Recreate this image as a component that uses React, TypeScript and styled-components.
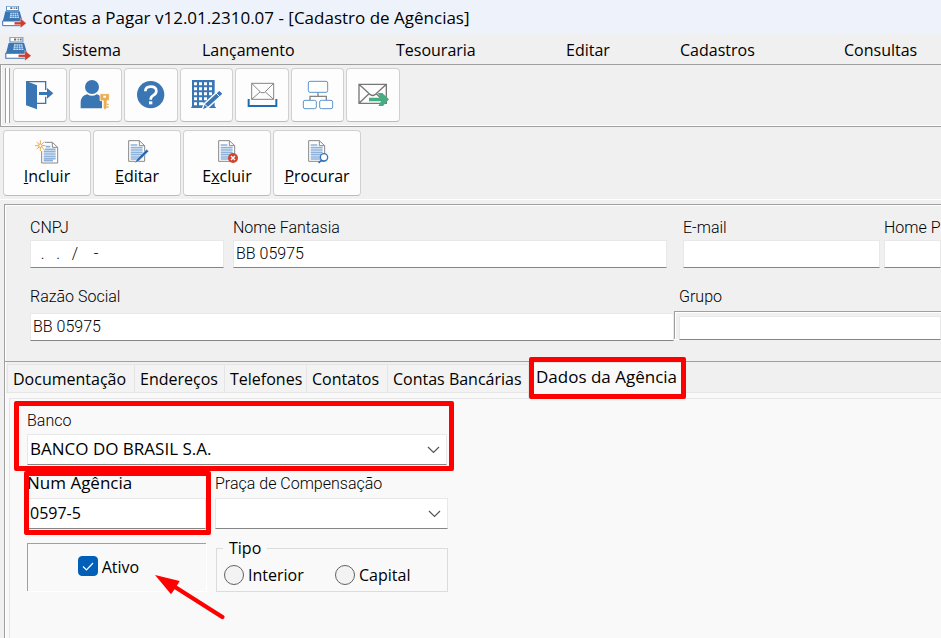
import React from "react";
import styled, { createGlobalStyle, css } from "styled-components";

const GlobalStyle = createGlobalStyle`
  *, *::before, *::after { box-sizing: border-box; }
  html, body, #root { min-height: 100vh; }
  body { margin: 0; overflow-x: hidden; background: #f0f0f0; color: #000; font: 16px/20px "Open Sans", "Noto Sans", sans-serif; }
  #root { display: flex; flex-direction: column; }
  button, input, select { font: inherit; color: inherit; }
`;

const BLUE = "#3a75b4";
const LINE = "#a0a0a0";
const RED = "#ff0000";

const Page = styled.div`
  flex: 1;
  display: flex;
  flex-direction: column;
  overflow: hidden;
`;

const TitleBar = styled.header`
  display: flex;
  align-items: center;
  gap: 5px;
  height: 34px;
  padding-left: 1px;
  background: #eef3fb;
  white-space: nowrap;
`;

const Title = styled.h1`
  margin: 0;
  padding-top: 2px;
  font-size: 17px;
  line-height: 24px;
  font-weight: 400;
`;

const MenuBar = styled.nav`
  display: grid;
  grid-template-columns: 58px 140px 194px 170px 114px 164px 1fr;
  align-items: center;
  height: 31px;
  padding-left: 4px;
  border-bottom: 1px solid ${LINE};
`;

const MenuItem = styled.button`
  justify-self: start;
  padding: 2px 0 0;
  border: 0;
  background: none;
  line-height: 24px;
`;

const ToolBar = styled.div`
  display: flex;
  gap: 4px;
  height: 62px;
  padding: 3px 0 0 5px;
  border-left: 1px solid ${LINE};
  border-bottom: 1px solid ${LINE};
  box-shadow: inset 1px -1px #fff;
`;

const Grip = styled.div`
  width: 5px;
  height: 55px;
  margin-left: -1px;
  border-left: 1px solid ${LINE};
  border-right: 1px solid ${LINE};
  background: #fff;
`;

const ToolGroup = styled.div`
  display: grid;
  grid-template-columns: repeat(7, 1fr);
  gap: 2px;
  width: 387px;
  height: 54px;
  margin-left: -1px;
`;

const Face = styled.button`
  display: flex;
  flex-direction: column;
  align-items: center;
  justify-content: center;
  padding: 0;
  border: 1px solid #d0d0d0;
  border-bottom-color: #bbb;
  border-radius: 4px;
  background: #fdfdfd;
`;

const ActionBar = styled.div`
  display: flex;
  gap: 2px;
  padding: 3px;
  border-bottom: 1px solid #fff;
`;

const ActionButton = styled(Face)`
  width: 88px;
  height: 66px;
  justify-content: flex-start;
  padding-top: 7px;
  line-height: 20px;
`;

const Panel = styled.main`
  flex: 1;
  display: flex;
  flex-direction: column;
  margin: 4px 0 0 4px;
  border-top: 1px solid ${LINE};
  border-left: 1px solid ${LINE};
  box-shadow: inset 1px 1px #fff;
`;

const FormArea = styled.section`
  display: flex;
  flex-direction: column;
  gap: 19px;
  padding: 13px 0 20px 25px;
  border-bottom: 1px solid ${LINE};
`;

const FieldRow = styled.div<{ $columns: string }>`
  display: grid;
  grid-template-columns: ${(p) => p.$columns};
`;

const Field = styled.div<{ $gap?: number; $end?: number }>`
  display: flex;
  flex-direction: column;
  gap: ${(p) => p.$gap ?? 4}px;
  padding-right: ${(p) => p.$end ?? 0}px;
  min-width: 0;
  position: relative;
`;

const Label = styled.label<{ $system?: boolean; $indent?: number }>`
  height: 18px;
  padding-left: ${(p) => p.$indent ?? 0}px;
  font-family: Roboto, "Liberation Sans", sans-serif;
  font-weight: 300;
  line-height: 20px;
  white-space: nowrap;
  ${(p) => p.$system && css`
    font-family: "Open Sans", sans-serif;
    font-size: 17px;
    font-weight: 400;
    line-height: 18px;
  `}
`;

const control = css`
  width: 100%;
  border: 1px solid #e8e8e8;
  border-bottom-color: #858585;
  border-radius: 0;
  background: #fff;
  outline: 0;
`;

const TextInput = styled.input`
  ${control}
  height: 28px;
  padding: 0 2px 2px;
  font-family: Roboto, "Liberation Sans", sans-serif;
  font-weight: 300;
  white-space: pre;
`;

const AgencyInput = styled(TextInput)`
  height: 31px;
  font-family: "Open Sans", sans-serif;
  font-weight: 400;
`;

const Sunken = styled.div`
  height: 28px;
  padding: 4px 0 0 4px;
  margin-top: -2px;
  border-top: 1px solid ${LINE};
  border-left: 1px solid ${LINE};
  box-shadow: inset 1px 1px #fff, 0 1px #fff;

  ${TextInput} { height: 24px; }
`;

const TabArea = styled.section`
  flex: 1;
  display: flex;
  flex-direction: column;
  margin-left: 1px;
  background: #f9f9f9;
`;

const TabList = styled.div`
  display: flex;
  height: 31px;
  padding: 2px 0 0 1px;
  background: #f0f0f0;
  border-bottom: 1px solid #e5e5e5;
`;

const Tab = styled.button<{ $width: number; $active?: boolean }>`
  position: relative;
  flex: none;
  width: ${(p) => p.$width}px;
  padding: 0 0 0 5px;
  border: solid #e5e5e5;
  border-width: 1px 0 0 1px;
  background: #f3f3f3;
  text-align: left;
  white-space: nowrap;
  ${(p) => p.$active && css`
    height: 36px;
    margin-top: -2px;
    padding: 0 0 8px 7px;
    background: #f9f9f9;
    font-size: 17px;
  `}
`;

const TabPage = styled.div`
  flex: 1;
  margin: 5px 0 0 3px;
  padding: 12px 0 0 17px;
  border-top: 1px solid #e5e5e5;
  border-left: 1px solid #e5e5e5;
`;

const AgencyGrid = styled.div`
  display: grid;
  grid-template-columns: 179px 233px;
  column-gap: 9px;
  width: 421px;
`;

const BankField = styled(Field)`
  grid-column: 1 / -1;
  margin-bottom: 9px;
`;

const Highlight = styled.span<{ $inset: string }>`
  position: absolute;
  z-index: 1;
  inset: ${(p) => p.$inset};
  border: 5px solid ${RED};
  border-radius: 2px;
  pointer-events: none;
`;

const SelectBox = styled.div`
  position: relative;

  select {
    ${control}
    appearance: none;
    height: 31px;
    padding: 0 30px 2px 2px;
    font-size: 17px;
  }
  svg {
    position: absolute;
    right: 7px;
    top: 12px;
    pointer-events: none;
  }
`;

const ActiveBox = styled.div`
  position: relative;
  display: flex;
  justify-content: center;
  height: 48px;
  margin-top: 14px;
  padding: 12px 17px 0 0;
  border-top: 1px solid ${LINE};
  border-left: 1px solid ${LINE};
  box-shadow: 1px 1px #fff;
`;

const CheckLabel = styled.label`
  display: grid;
  grid-template-columns: 20px auto;
  column-gap: 4px;
  align-self: flex-start;
  line-height: 22px;

  input, svg { grid-area: 1 / 1; margin: 0; }
  input {
    appearance: none;
    width: 20px;
    height: 20px;
    border: 1px solid #666;
    border-radius: 4px;
    background: #fff;
  }
  input:checked { border-color: #005fb8; background: #005fb8; }
  svg { visibility: hidden; pointer-events: none; }
  input:checked + svg { visibility: visible; }
`;

const ArrowMark = styled.svg`
  position: absolute;
  left: 125px;
  top: 29px;
  pointer-events: none;
`;

const TypeGroup = styled.fieldset`
  display: grid;
  grid-template-columns: 111px 1fr;
  align-items: center;
  min-width: 0;
  height: 54px;
  margin: 9px 0 0 1px;
  padding: 0 0 0 7px;
  border: 1px solid #dcdcdc;

  legend {
    margin-left: -1px;
    padding: 0 6px;
    height: 20px;
    line-height: 20px;
  }
`;

const RadioLabel = styled.label`
  display: flex;
  align-items: center;
  gap: 4px;

  input {
    appearance: none;
    width: 20px;
    height: 20px;
    margin: 0;
    border: 1px solid #626262;
    border-radius: 50%;
    background: #f3f3f3;
  }
  input:checked { border: 6px solid #005fb8; background: #fff; }
`;

function RegisterIcon({ size = 26 }: { size?: number }) {
  return (
    <svg width={size} height={size} viewBox="3 12 78 78" aria-hidden="true">
      <path d="M18 18H57V33H18Z" fill="#5d94c8" />
      <path d="M21 20H54V30H21Z" fill="#fff" />
      <path d="M31 22h6v5h-6zM41 22h3v5h-3zM47 22h5v5h-5z" fill="#666" />
      <path d="M16 34H59L68 65H8Z" fill={BLUE} />
      <path d="M31 38H54L57 54H29Z" fill="#d9e7f4" />
      <path d="M30 43H55M29 49H56M37 38L36 54M43 38V54M49 38L51 54" stroke={BLUE} strokeWidth="2" />
      <path d="M8 63H66V77H8Z" fill="#fff" stroke={BLUE} strokeWidth="3" />
      <path d="M43 66H61V55L79 70L61 84V74H43Z" fill="#cf3d2e" stroke="#fff" strokeWidth="1" />
    </svg>
  );
}

function ToolIcon({ box, children }: { box: string; children: React.ReactNode }) {
  return (
    <svg width="36" height="36" viewBox={box} fill="none" aria-hidden="true">
      {children}
    </svg>
  );
}

const tools = [
  {
    name: "Sair",
    icon: (
      <ToolIcon box="66 51 108 108">
        <path d="M78 65H137V90M137 110V130H110" stroke={BLUE} strokeWidth="4" />
        <path d="M78 63L111 76V148L78 136Z" fill={BLUE} />
        <path d="M117 96H141V84L160 100L141 116V105H117Z" fill={BLUE} />
      </ToolIcon>
    ),
  },
  {
    name: "Usuário",
    icon: (
      <ToolIcon box="232 51 108 108">
        <circle cx="277" cy="81" r="21" fill={BLUE} />
        <path d="M243 145V129Q243 107 263 103Q277 112 291 103Q305 106 307 120V145Z" fill={BLUE} />
        <path d="M301 101H329V122H322V144L316 150L311 144V122H301Z" fill="#e9ae55" stroke="#fff" strokeWidth="2" />
        <path d="M311 107H319V113H311Z" fill="#fff" />
        <path d="M322 133H327M322 141H327" stroke="#e9ae55" strokeWidth="4" />
      </ToolIcon>
    ),
  },
  {
    name: "Ajuda",
    icon: (
      <ToolIcon box="399 51 108 108">
        <circle cx="452" cy="104" r="41" fill={BLUE} />
        <path d="M436 94Q436 80 452 80Q469 80 469 93Q469 102 460 106Q452 110 452 119" stroke="#fff" strokeWidth="8" />
        <path d="M447 124H457V133H447Z" fill="#fff" />
      </ToolIcon>
    ),
  },
  {
    name: "Empresa",
    icon: (
      <ToolIcon box="-33 51 108 108">
        <path d="M-21 60H47V139L52 144H-24L-21 138Z" fill={BLUE} />
        <path d="M-15 67h9v9h-9zM0 67h9v9H0zM15 67h9v9h-9zM30 67h9v9h-9zM-15 82h9v9h-9zM0 82h9v9H0zM15 82h9v9h-9zM30 82h9v9h-9zM-15 97h9v9h-9zM0 97h9v9H0zM15 97h9v9h-9zM30 97h9v9h-9zM-15 112h9v9h-9zM0 112h9v9H0zM15 112h9v9h-9zM-15 127h9v9h-9zM0 127h14v9H0z" fill="#fff" />
        <path d="M8 152L16 131L61 90L73 101L28 142Z" fill={BLUE} stroke="#fff" strokeWidth="4" />
        <path d="M50 98L63 111M16 132L27 142" stroke="#fff" strokeWidth="3" />
      </ToolIcon>
    ),
  },
  {
    name: "Caixa de entrada",
    icon: (
      <ToolIcon box="134 51 108 108">
        <path d="M157 70H223V118H157ZM157 70L185 98H195L223 70M157 118L182 96M223 118L198 96" stroke="#858585" strokeWidth="3" />
        <path d="M148 117V138H231V117" stroke="#246bb0" strokeWidth="6" />
      </ToolIcon>
    ),
  },
  {
    name: "Organograma",
    icon: (
      <ToolIcon box="300 51 108 108">
        <path d="M354 98V109M330 120V109H379V120" stroke="#858585" strokeWidth="4" />
        <rect x="325" y="64" width="58" height="33" rx="5" fill="#fff" stroke="#5c96cf" strokeWidth="3" />
        <rect x="310" y="121" width="39" height="25" rx="5" fill="#fff" stroke="#5c96cf" strokeWidth="3" />
        <rect x="359" y="121" width="39" height="25" rx="5" fill="#fff" stroke="#5c96cf" strokeWidth="3" />
      </ToolIcon>
    ),
  },
  {
    name: "Enviar",
    icon: (
      <ToolIcon box="466 51 108 108">
        <path d="M478 73H560V130H478ZM478 73L512 104Q519 109 526 104L560 73M478 130L508 101M530 101L544 115" stroke="#777" strokeWidth="4" />
        <path d="M508 113H543L534 99H548L568 118L550 138H536L544 124H508Z" fill="#46ad83" />
      </ToolIcon>
    ),
  },
];

function DocIcon({ children }: { children: React.ReactNode }) {
  return (
    <svg width="28" height="28" viewBox="369 39 84 84" fill="none" aria-hidden="true">
      {children}
    </svg>
  );
}

function Sheet({ x = 0, y = 0 }: { x?: number; y?: number }) {
  return (
    <g transform={`translate(${x} ${y})`}>
      <path d="M386 47H418L434 62V109H386Z" fill="#fff" stroke="#888" strokeWidth="3" />
      <path d="M418 47V62H434" stroke="#888" strokeWidth="3" />
      <path d="M392 60H412M392 68H428M392 75H428M392 82H428M392 89H428M392 96H428M392 102H420" stroke="#8db1d9" strokeWidth="5" />
    </g>
  );
}

const actions = [
  {
    before: "", key: "I", after: "ncluir",
    icon: (
      <DocIcon>
        <Sheet x={9} y={5} />
        <circle cx="391" cy="62" r="17" fill="#fdfdfd" />
        <path d="M391 46V78M375 62H407M380 51L402 73M402 51L380 73" stroke="#eeaa45" strokeWidth="3" />
        <circle cx="391" cy="62" r="5" fill="#fff" stroke="#eeaa45" strokeWidth="3" />
      </DocIcon>
    ),
  },
  {
    before: "", key: "E", after: "ditar",
    icon: (
      <DocIcon>
        <Sheet />
        <path d="M404 114L411 102L440 73L446 79L416 108Z" fill="#2c68b0" stroke="#fff" strokeWidth="1" />
      </DocIcon>
    ),
  },
  {
    before: "E", key: "x", after: "cluir",
    icon: (
      <DocIcon>
        <Sheet />
        <circle cx="429" cy="99" r="15" fill="#d1452f" />
        <path d="M423 93L435 105M435 93L423 105" stroke="#fff" strokeWidth="4" />
      </DocIcon>
    ),
  },
  {
    before: "", key: "P", after: "rocurar",
    icon: (
      <DocIcon>
        <Sheet />
        <circle cx="432" cy="97" r="11" fill="#fff" stroke="#3673b8" strokeWidth="4" />
        <path d="M425 105L416 114" stroke="#3673b8" strokeWidth="5" />
      </DocIcon>
    ),
  },
];

const menus = ["Sistema", "Lançamento", "Tesouraria", "Editar", "Cadastros", "Consultas"];

const tabs = [
  { name: "Documentação", width: 127 },
  { name: "Endereços", width: 90 },
  { name: "Telefones", width: 82 },
  { name: "Contatos", width: 81 },
  { name: "Contas Bancárias", width: 141 },
];

function Chevron() {
  return (
    <svg width="13" height="8" viewBox="0 0 13 8" fill="none" aria-hidden="true">
      <path d="M1 1L6.500 6.500L12 1" stroke="#555" strokeWidth="1.200" />
    </svg>
  );
}

export default function App() {
  return (
    <Page>
      <GlobalStyle />
      <TitleBar>
        <RegisterIcon />
        <Title>Contas a Pagar v12.01.2310.07 - [Cadastro de Agências]</Title>
      </TitleBar>
      <MenuBar>
        <RegisterIcon size={28} />
        {menus.map((m) => <MenuItem key={m}>{m}</MenuItem>)}
      </MenuBar>
      <ToolBar>
        <Grip />
        <ToolGroup>
          {tools.map((t) => <Face key={t.name} aria-label={t.name}>{t.icon}</Face>)}
        </ToolGroup>
      </ToolBar>
      <ActionBar>
        {actions.map((a) => (
          <ActionButton key={a.after}>
            {a.icon}
            <span>{a.before}<u>{a.key}</u>{a.after}</span>
          </ActionButton>
        ))}
      </ActionBar>
      <Panel>
        <FormArea>
          <FieldRow $columns="203px minmax(0, 450px) 201px minmax(57px, 1fr)">
            <Field $end={9}>
              <Label htmlFor="cnpj">CNPJ</Label>
              <TextInput id="cnpj" defaultValue="  .   .   /    -" />
            </Field>
            <Field $end={16}>
              <Label htmlFor="fantasia">Nome Fantasia</Label>
              <TextInput id="fantasia" defaultValue="BB 05975" />
            </Field>
            <Field $end={4}>
              <Label htmlFor="email">E-mail</Label>
              <TextInput id="email" />
            </Field>
            <Field>
              <Label htmlFor="home">Home P</Label>
              <TextInput id="home" />
            </Field>
          </FieldRow>
          <FieldRow $columns="minmax(0, 644px) minmax(200px, 1fr)">
            <Field $gap={8}>
              <Label htmlFor="razao">Razão Social</Label>
              <TextInput id="razao" defaultValue="BB 05975" />
            </Field>
            <Field $gap={8}>
              <Label htmlFor="grupo" $indent={5}>Grupo</Label>
              <Sunken><TextInput id="grupo" /></Sunken>
            </Field>
          </FieldRow>
        </FormArea>
        <TabArea>
          <TabList role="tablist">
            {tabs.map((t) => <Tab key={t.name} role="tab" $width={t.width}>{t.name}</Tab>)}
            <Tab role="tab" aria-selected="true" $width={155} $active>
              Dados da Agência
              <Highlight $inset="-6px -3px -1px 0" />
            </Tab>
          </TabList>
          <TabPage role="tabpanel">
            <AgencyGrid>
              <BankField $gap={5} $end={1}>
                <Label htmlFor="banco">Banco</Label>
                <SelectBox>
                  <select id="banco"><option>BANCO DO BRASIL S.A.</option></select>
                  <Chevron />
                </SelectBox>
                <Highlight $inset="-10px -6px -6px -13px" />
              </BankField>
              <Field $gap={6}>
                <Label htmlFor="agencia" $system>Num Agência</Label>
                <AgencyInput id="agencia" defaultValue="0597-5" />
                <Highlight $inset="-3px -5px -6px -3px" />
              </Field>
              <Field $gap={6}>
                <Label htmlFor="praca">Praça de Compensação</Label>
                <SelectBox>
                  <select id="praca"><option></option></select>
                  <Chevron />
                </SelectBox>
              </Field>
              <ActiveBox>
                <CheckLabel>
                  <input type="checkbox" defaultChecked />
                  <svg width="20" height="20" viewBox="0 0 20 20" fill="none" aria-hidden="true">
                    <path d="M5 10.500L8.500 14L15 7" stroke="#fff" strokeWidth="1.200" />
                  </svg>
                  <span>Ativo</span>
                </CheckLabel>
                <ArrowMark width="72" height="48" viewBox="462 324 216 144" aria-hidden="true">
                  <path d="M528 366L670 456" stroke={RED} strokeWidth="13" strokeLinecap="round" />
                  <path d="M468 330L542 348L530 368L516 388Z" fill={RED} />
                </ArrowMark>
              </ActiveBox>
              <TypeGroup>
                <legend>Tipo</legend>
                <RadioLabel><input type="radio" name="tipo" />Interior</RadioLabel>
                <RadioLabel><input type="radio" name="tipo" />Capital</RadioLabel>
              </TypeGroup>
            </AgencyGrid>
          </TabPage>
        </TabArea>
      </Panel>
    </Page>
  );
}
